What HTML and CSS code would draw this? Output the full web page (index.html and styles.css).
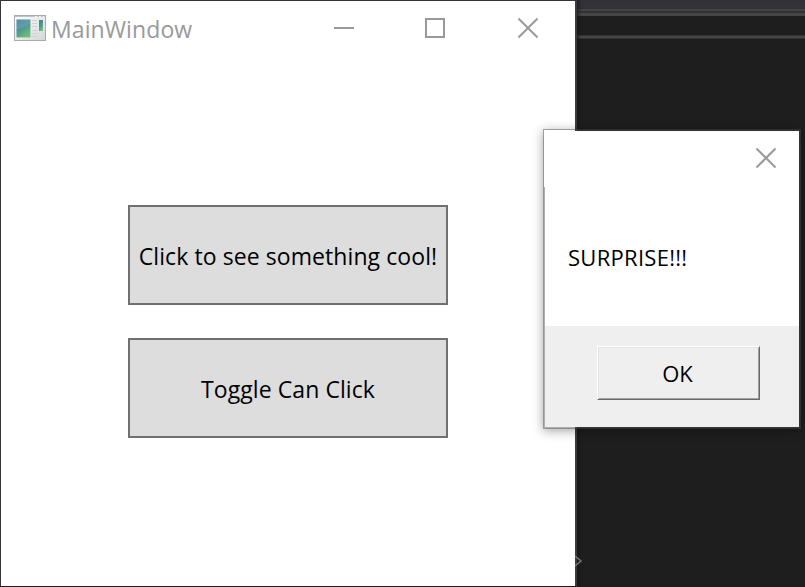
FILE: index.html
```html
<!DOCTYPE html>
<html lang="en">
<head>
<meta charset="utf-8">
<title>MainWindow</title>
<link rel="stylesheet" href="styles.css">
</head>
<body>
<div class="desktop">
  <main class="window">
    <header class="titlebar">
      <svg class="app-icon" width="32" height="26" viewBox="0 0 32 26">
        <defs>
          <linearGradient id="pane" x1="0" y1="0" x2=".6" y2="1"><stop offset="0" stop-color="#467ba3"/><stop offset=".5" stop-color="#4a9398"/><stop offset="1" stop-color="#6fbd78"/></linearGradient>
          <linearGradient id="frame" x1="0" y1="0" x2="1" y2="1"><stop offset="0" stop-color="#fff"/><stop offset="1" stop-color="#d4d5d6"/></linearGradient>
        </defs>
        <rect x=".5" y=".5" width="31" height="25" fill="url(#frame)" stroke="#a5abae"/>
        <path d="M1 1.500h30" stroke="#bcc5c9"/>
        <path d="M21 1.500h2m2 0h2m2 0h1" stroke="#f5f5f5"/>
        <rect x="2" y="4" width="15" height="19" fill="#eef3f3"/>
        <rect x="2.500" y="4.500" width="14" height="18" fill="url(#pane)"/>
        <path d="M2.500 14C8 14 12 11 16.500 8V4.500h-14z" fill="#fff" opacity=".12"/>
        <path d="M18 5.500h5m-5 3h5m-5 3h5m-5 4h5m-5 3h6m-6 3h5" stroke="#cfd3d4"/>
        <rect x="25" y="5" width="4" height="11" fill="url(#pane)"/>
      </svg>
      <h1 class="title">MainWindow</h1>
      <div class="controls">
        <svg class="minimize" width="20" height="20" viewBox="0 0 20 20"><path d="M0 10h20"/></svg>
        <svg width="20" height="20" viewBox="0 0 20 20"><path d="M1 1h18v18H1z"/></svg>
        <svg class="close" width="20" height="20" viewBox="0 0 20 20"><path d="M.5.5l19 19m0-19l-19 19"/></svg>
      </div>
    </header>
    <section class="content">
      <button class="action">Click to see something cool!</button>
      <button class="action">Toggle Can Click</button>
    </section>
  </main>
  <aside class="editor">
    <svg class="chevron" width="8" height="12" viewBox="0 0 8 12"><path d="M0 1l6 5-6 5"/></svg>
  </aside>
  <div class="dialog">
    <header class="dialog-bar">
      <svg class="close" width="20" height="20" viewBox="0 0 20 20"><path d="M.5.5l19 19m0-19l-19 19"/></svg>
    </header>
    <div class="message">SURPRISE!!!</div>
    <footer class="dialog-footer"><button class="ok">OK</button></footer>
  </div>
</div>
</body>
</html>
```
FILE: styles.css
```css
* { box-sizing: border-box; }
body { margin: 0; font-family: "Open Sans", "Noto Sans", sans-serif; color: #000; }
.desktop { position: relative; display: flex; width: 805px; height: 587px; overflow: hidden; background: #1e1e1e; }
.window { width: 577px; height: 587px; background: #fff; border: 1px solid #343438; border-right: 2px solid #3a3b3c; border-bottom-color: #1c191d; }
.titlebar { display: flex; align-items: center; height: 54px; padding-left: 13px; }
.app-icon { flex: none; }
.title { margin: 2px 0 0 5px; width: 142px; font-size: 23px; font-weight: 400; line-height: 32px; white-space: nowrap; color: #999; letter-spacing: .1px; }
.controls { display: flex; gap: 72px; margin-left: 141px; }
.controls svg, .dialog-bar svg { display: block; fill: none; stroke: #999; stroke-width: 2; }
.controls .minimize { margin-right: -1px; }
.controls .close { margin-left: 1px; }
.content { display: flex; flex-direction: column; align-items: center; gap: 33px; padding-top: 150px; }
.action { width: 320px; height: 100px; padding: 1px 0 0; border: 2px solid #707070; background: #ddd; font: 23px/32px "Open Sans", sans-serif; letter-spacing: .08px; color: #000; white-space: nowrap; }
.editor { flex: 1; position: relative; background: linear-gradient(#333337 0 9px, #434348 9px 11px, #333337 11px 13px, #464646 13px 16px, #1e1e1e 16px 35px, #333 35px 36px, #464646 36px 38px, #333 38px 39px, #1e1e1e 39px); box-shadow: inset 4px 0 4px -3px #161616; }
.chevron { position: absolute; left: -2px; top: 555px; fill: none; stroke: #777; stroke-width: 1.500; }
.dialog { position: absolute; left: 543px; top: 129px; width: 258px; height: 300px; display: flex; flex-direction: column; background: #fff; background-clip: padding-box; border: 2px solid rgba(75,75,75,.45); box-shadow: 0 2px 10px rgba(0,0,0,.35); }
.dialog-bar { position: relative; display: flex; justify-content: flex-end; height: 56px; margin-left: -1px; padding: 17px 23px 0 0; background: #fff; }
.dialog-bar::before { content: ""; position: absolute; left: 0; top: -1px; width: 31px; height: 1px; background: #fff; }
.message { height: 139px; padding: 54px 0 0 23px; font-size: 22px; line-height: 32px; letter-spacing: .28px; white-space: nowrap; }
.dialog-footer { flex: 1; padding: 20px 0 0 52px; background: #efefef; }
.ok { display: block; width: 163px; height: 54px; padding: 0 2px 0 0; border: 1px solid; border-color: #fff #696969 #696969 #fff; background: #efefef; box-shadow: inset 1px 1px #e3e3e3, inset -1px -1px #a0a0a0; font: 22px/32px "Open Sans", sans-serif; color: #000; }
```
